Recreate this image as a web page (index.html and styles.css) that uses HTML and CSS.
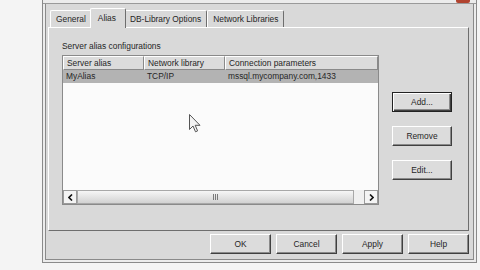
FILE: index.html
```html
<!DOCTYPE html>
<html>
<head>
<meta charset="utf-8">
<title>Client Network Utility - Alias</title>
<link rel="stylesheet" href="styles.css">
</head>
<body>
<div class="window">
  <div class="titlebar"><span class="close"></span></div>
  <div class="body">
    <div class="tabs">
      <div class="tab">General</div>
      <div class="tab active">Alias</div>
      <div class="tab">DB-Library Options</div>
      <div class="tab">Network Libraries</div>
    </div>
    <div class="panel">
      <div class="main">
        <div class="group-label">Server alias configurations</div>
        <div class="list">
          <div class="header">
            <div class="hcell c1">Server alias</div>
            <div class="hcell c2">Network library</div>
            <div class="hcell c3">Connection parameters</div>
          </div>
          <div class="row selected">
            <div class="cell c1">MyAlias</div>
            <div class="cell c2">TCP/IP</div>
            <div class="cell c3">mssql.mycompany.com,1433</div>
          </div>
          <div class="spacer"></div>
          <div class="hscroll">
            <div class="sbtn"><svg width="5" height="7" viewBox="0 0 5 7"><polyline points="4,0.5 1,3.5 4,6.5" fill="none" stroke="#111" stroke-width="1.6"/></svg></div>
            <div class="thumb"><span class="grip"></span><span class="grip"></span><span class="grip"></span></div>
            <div class="track"></div>
            <div class="sbtn"><svg width="5" height="7" viewBox="0 0 5 7"><polyline points="1,0.5 4,3.5 1,6.5" fill="none" stroke="#111" stroke-width="1.6"/></svg></div>
          </div>
        </div>
      </div>
      <div class="side">
        <div class="btn default">Add...</div>
        <div class="btn">Remove</div>
        <div class="btn">Edit...</div>
      </div>
    </div>
    <div class="footer">
      <div class="btn wide">OK</div>
      <div class="btn wide">Cancel</div>
      <div class="btn wide">Apply</div>
      <div class="btn wide">Help</div>
    </div>
  </div>
</div>
<svg class="cursor" width="12" height="19" viewBox="0 0 12 19"><path d="M0.5,0.5 L0.5,15.5 L4,12 L6.5,17.8 L8.6,16.9 L6.2,11.3 L11,11.3 Z" fill="#f4f4f4" stroke="#555" stroke-width="1"/></svg>
</body>
</html>
```
FILE: styles.css
```css
html, body {
  margin: 0;
  padding: 0;
}
body {
  width: 480px;
  height: 270px;
  overflow: hidden;
  position: relative;
  background: #f4f4f4;
  font-family: "Liberation Sans", Arial, sans-serif;
  font-size: 8.4px;
  color: #262626;
}
.window {
  margin-left: 42px;
  width: 435px;
  height: 263px;
  box-sizing: border-box;
  border: 1px solid #8a8a8a;
  border-top: 0;
  background: #d9d9d9;
  box-shadow: inset 0 0 0 2px #ececec, inset 0 0 0 3px #8a8a8a;
}
.titlebar {
  height: 3px;
  border-bottom: 1px solid #9a9a9a;
  background: #ececec;
  display: flex;
  justify-content: flex-end;
  padding-right: 6px;
}
.close {
  width: 14px;
  height: 3px;
  background: #b1432f;
  border-radius: 0 0 2px 2px;
}
.body {
  padding: 0 7px 8px 5px;
}
.tabs {
  display: flex;
  align-items: flex-end;
  height: 19px;
  margin-top: 4px;
  padding-left: 2px;
}
.tab {
  height: 16px;
  line-height: 16px;
  padding: 0 5px;
  border: 1px solid;
  border-color: #fff #6e6e6e transparent #fff;
  border-bottom: 0;
  border-radius: 2px 2px 0 0;
  white-space: nowrap;
}
.tab.active {
  height: 19px;
  line-height: 18px;
  margin: 0 -2px -1px;
  padding: 0 9px 0 7px;
  background: #d9d9d9;
  position: relative;
  z-index: 1;
}
.panel {
  height: 204px;
  box-sizing: border-box;
  border: 1px solid;
  border-color: #fff #6e6e6e #6e6e6e #fff;
  padding: 13px 0 0 13px;
  display: flex;
}
.main {
  width: 317px;
}
.group-label {
  height: 10px;
  line-height: 10px;
  margin-bottom: 4px;
  white-space: nowrap;
}
.list {
  height: 150px;
  box-sizing: border-box;
  border: 1px solid #8a8a8a;
  background: #fbfbfb;
  display: flex;
  flex-direction: column;
}
.header {
  display: flex;
  height: 14px;
}
.hcell {
  box-sizing: border-box;
  border: 1px solid;
  border-color: #fff #8a8a8a #8a8a8a #fff;
  background: #dcdcdc;
  line-height: 12px;
  padding-left: 3px;
  white-space: nowrap;
}
.c1, .c2 {
  width: 81px;
  flex: none;
}
.c3 {
  flex: 1;
}
.row {
  display: flex;
  height: 13px;
  line-height: 13px;
}
.row.selected {
  background: #b3b3b3;
}
.cell {
  box-sizing: border-box;
  padding-left: 3px;
  white-space: nowrap;
}
.spacer {
  flex: 1;
}
.hscroll {
  display: flex;
  height: 14px;
  background: #ededed;
}
.sbtn {
  width: 14px;
  flex: none;
  box-sizing: border-box;
  border: 1px solid #9a9a9a;
  background: #f4f4f4;
  display: flex;
  align-items: center;
  justify-content: center;
}
.thumb {
  width: 277px;
  flex: none;
  box-sizing: border-box;
  border: 1px solid #a8a8a8;
  background: linear-gradient(#f6f6f6, #d2d2d2);
  display: flex;
  align-items: center;
  justify-content: center;
  gap: 1px;
}
.grip {
  width: 1px;
  height: 6px;
  background: #7a7a7a;
}
.track {
  flex: 1;
  background: #f0f0f0;
}
.side {
  display: flex;
  flex-direction: column;
  gap: 14px;
  margin: 51px 0 0 13px;
}
.btn {
  width: 60px;
  height: 20px;
  box-sizing: border-box;
  display: flex;
  align-items: center;
  justify-content: center;
  background: #dcdcdc;
  border: 1px solid;
  border-color: #fff #404040 #404040 #fff;
  box-shadow: inset -1px -1px #8a8a8a;
}
.btn.default {
  border-color: #222;
  box-shadow: inset 1px 1px #fff, inset -1px -1px #404040, inset -2px -2px #8a8a8a;
}
.btn.wide {
  width: 61px;
}
.footer {
  display: flex;
  justify-content: flex-end;
  gap: 5px;
  margin-top: 3px;
}
.cursor {
  position: absolute;
  left: 189px;
  top: 114px;
}
```
